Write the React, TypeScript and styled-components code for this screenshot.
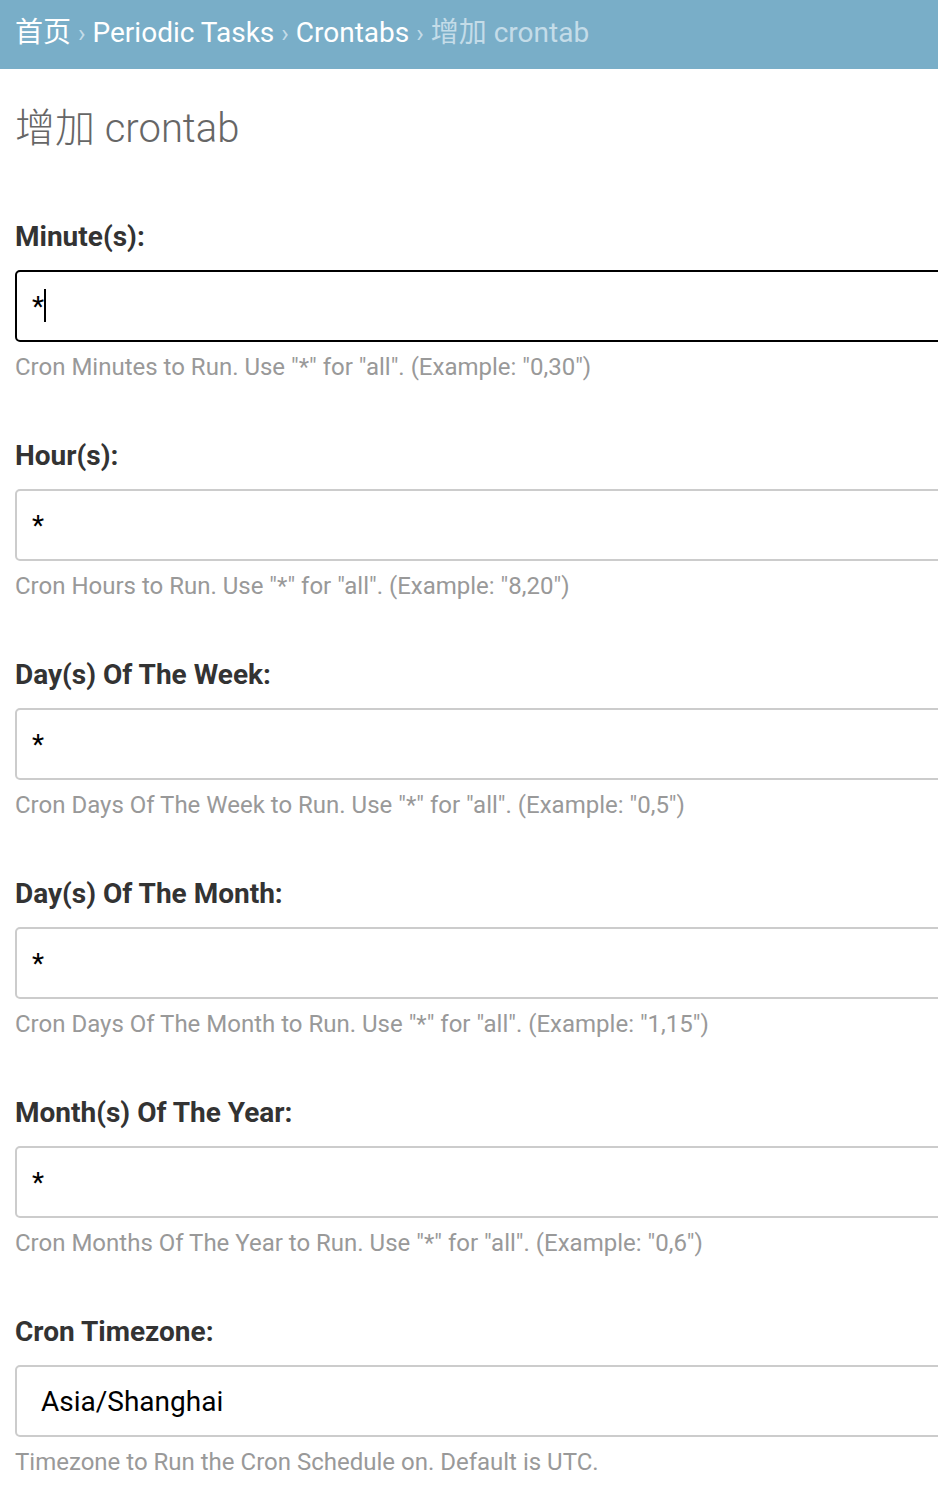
import React from "react";
import styled, { createGlobalStyle } from "styled-components";

const GlobalStyle = createGlobalStyle`
  html, body {
    margin: 0;
    padding: 0;
    background: #fff;
    overflow-x: hidden;
  }
  body {
    font-family: Roboto, "Noto Sans CJK SC", "Liberation Sans", sans-serif;
    color: #333;
  }
`;

const Breadcrumbs = styled.div`
  height: 69px;
  box-sizing: border-box;
  background: #79aec8;
  padding: 0 15px;
  font-size: 28px;
  line-height: 66px;
  color: #fff;
  white-space: nowrap;
`;

const Crumb = styled.a<{ $current?: boolean }>`
  color: ${(p) => (p.$current ? "#c4dce8" : "#fff")};
  text-decoration: none;
`;

const Sep = styled.span`
  color: #c4dce8;
  font-size: 25px;
  margin: 0 7px;
`;

const Content = styled.div`
  padding: 36px 15px 40px;
`;

const Title = styled.h1`
  margin: 0 0 66px;
  font-size: 40px;
  line-height: 48px;
  font-weight: 300;
  color: #666;
`;

const Field = styled.div`
  display: flex;
  flex-direction: column;
  margin-bottom: 56px;
`;

const Label = styled.label`
  font-size: 28px;
  line-height: 36px;
  font-weight: 700;
  color: #333;
  margin-bottom: 15px;
`;

const InputWrap = styled.div`
  position: relative;
  width: 980px;
`;

const TextInput = styled.input<{ $focused?: boolean }>`
  display: block;
  box-sizing: border-box;
  width: 100%;
  height: 72px;
  margin: 0;
  padding: 0 15px;
  border: 2px solid ${(p) => (p.$focused ? "#000" : "#ccc")};
  border-radius: 5px;
  font-family: Roboto, "Liberation Sans", sans-serif;
  font-size: 28px;
  color: #000;
  background: #fff;
  outline: none;
`;

const Select = styled.select`
  display: block;
  box-sizing: border-box;
  width: 100%;
  height: 72px;
  margin: 0;
  padding: 0 24px;
  border: 2px solid #ccc;
  border-radius: 5px;
  font-family: Roboto, "Liberation Sans", sans-serif;
  font-size: 28px;
  color: #000;
  background: #fff;
  appearance: none;
  outline: none;
`;

const Caret = styled.span`
  position: absolute;
  left: 29px;
  top: 19px;
  width: 2px;
  height: 33px;
  background: #000;
`;

const Help = styled.div`
  margin-top: 10px;
  font-size: 24px;
  line-height: 30px;
  color: #999;
`;

const fields = [
  { label: "Minute(s):", help: 'Cron Minutes to Run. Use "*" for "all". (Example: "0,30")', focused: true },
  { label: "Hour(s):", help: 'Cron Hours to Run. Use "*" for "all". (Example: "8,20")' },
  { label: "Day(s) Of The Week:", help: 'Cron Days Of The Week to Run. Use "*" for "all". (Example: "0,5")' },
  { label: "Day(s) Of The Month:", help: 'Cron Days Of The Month to Run. Use "*" for "all". (Example: "1,15")' },
  { label: "Month(s) Of The Year:", help: 'Cron Months Of The Year to Run. Use "*" for "all". (Example: "0,6")' },
];

export default function App() {
  return (
    <>
      <GlobalStyle />
      <Breadcrumbs>
        <Crumb href="#">首页</Crumb>
        <Sep>›</Sep>
        <Crumb href="#">Periodic Tasks</Crumb>
        <Sep>›</Sep>
        <Crumb href="#">Crontabs</Crumb>
        <Sep>›</Sep>
        <Crumb $current>增加 crontab</Crumb>
      </Breadcrumbs>
      <Content>
        <Title>增加 crontab</Title>
        {fields.map((f) => (
          <Field key={f.label}>
            <Label>{f.label}</Label>
            <InputWrap>
              <TextInput readOnly defaultValue="*" $focused={f.focused} />
              {f.focused && <Caret />}
            </InputWrap>
            <Help>{f.help}</Help>
          </Field>
        ))}
        <Field>
          <Label>Cron Timezone:</Label>
          <InputWrap>
            <Select defaultValue="Asia/Shanghai">
              <option>Asia/Shanghai</option>
              <option>UTC</option>
            </Select>
          </InputWrap>
          <Help>Timezone to Run the Cron Schedule on. Default is UTC.</Help>
        </Field>
      </Content>
    </>
  );
}
